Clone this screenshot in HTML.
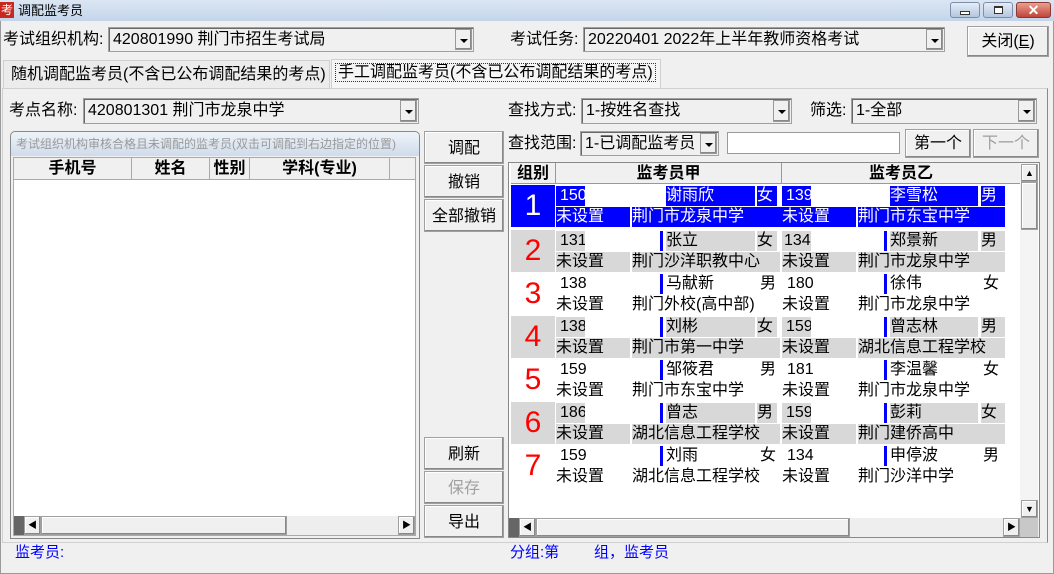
<!DOCTYPE html>
<html><head><meta charset="utf-8"><style>
*{box-sizing:border-box;margin:0;padding:0}
body{width:1054px;height:574px;background:#f0f0f0;position:relative;overflow:hidden;font-family:"Liberation Sans","Noto Sans CJK SC",sans-serif;font-size:16px;color:#000;line-height:20px}
.a{position:absolute;white-space:nowrap}
.combo{position:absolute;background:#f0f0f0;border:1px solid #a0a0a0;box-shadow:inset 1px 1px 0 #696969;padding:1px 4px;line-height:21px;font-size:16px}
.combo .dd{position:absolute;right:1px;top:1px;bottom:1px;width:17px;background:#f0f0f0;border:1px solid #999;box-shadow:inset -1px -1px 0 #888}
.combo .dd:after{content:"";position:absolute;left:4px;top:9px;border:4px solid transparent;border-top:4px solid #000;border-bottom:0}
.btn{position:absolute;background:#f0f0f0;border:1px solid #a0a0a0;box-shadow:inset -1px -1px 0 #888,inset 1px 1px 0 #fff;text-align:center;font-size:16px}
.row{position:absolute;left:511px;width:494px;height:43px}
.row div{position:absolute;height:20px;line-height:20px;font-size:16px;overflow:hidden;white-space:nowrap}
.num{left:0;top:0;width:44px!important;height:42px!important;line-height:42px!important;text-align:center;font-size:30px!important;color:#f00}
.sel div{background:#0000ff;color:#fff}
.sel .num{color:#fff}
.g div{background:#d8d8d8}
.row .m{background:#fff!important}
.row .bar{background:#0000ff!important;width:3px}
</style></head><body>
<!-- title bar -->
<div class="a" style="left:0;top:0;width:1054px;height:21px;background:linear-gradient(#dbe6f4,#c4d5ea)"></div>
<div class="a" style="left:0;top:2px;width:14px;height:16px;background:#c8281e;color:#fff;font-size:12px;line-height:16px;text-align:center">考</div>
<div class="a" style="left:18px;top:1px;font-size:13px;line-height:19px">调配监考员</div>
<div class="a" style="left:950px;top:2px;width:30px;height:16px;border:1px solid #7d8fa8;border-radius:3px;background:linear-gradient(#e4ecf7,#b5c6de)"><div class="a" style="left:9px;top:8px;width:10px;height:4px;border:1px solid #333;background:#fff"></div></div>
<div class="a" style="left:983px;top:2px;width:30px;height:16px;border:1px solid #7d8fa8;border-radius:3px;background:linear-gradient(#e4ecf7,#b5c6de)"><div class="a" style="left:10px;top:3px;width:9px;height:8px;border:1px solid #333;border-top-width:2px;background:#fff"></div></div>
<div class="a" style="left:1016px;top:2px;width:35px;height:16px;border:1px solid #8a3a30;border-radius:3px;background:linear-gradient(#e8a08f,#c0453a);color:#fff;font-weight:bold;font-size:14px;line-height:14px;text-align:center">✕</div>
<div class="a" style="left:0;top:21px;width:1054px;height:553px;border:1px solid #9a9a9a;border-top:0"></div>

<!-- row 1 -->
<div class="a" style="left:3px;top:30px">考试组织机构:</div>
<div class="combo" style="left:108px;top:27px;width:366px;height:25px">420801990 荆门市招生考试局<div class="dd"></div></div>
<div class="a" style="left:510px;top:30px">考试任务:</div>
<div class="combo" style="left:583px;top:27px;width:362px;height:25px">20220401 2022年上半年教师资格考试<div class="dd"></div></div>
<div class="btn" style="left:967px;top:26px;width:82px;height:31px;line-height:29px">关闭(<u>E</u>)</div>

<!-- tabs -->
<div class="a" style="left:3px;top:60px;width:327px;height:28px;border:1px solid #d0d0d0;border-bottom:0;background:#ececec;padding:4px 0 0 7px">随机调配监考员(不含已公布调配结果的考点)</div>
<div class="a" style="left:331px;top:59px;width:330px;height:29px;border:1px solid #d0d0d0;border-bottom:0;background:#f5f5f5;padding:3px 0 0 3px"><span style="border:1px dotted #333;padding:0 2px">手工调配监考员(不含已公布调配结果的考点)</span></div>
<div class="a" style="left:2px;top:88px;width:1046px;height:455px;border:1px solid #d0d0d0;border-right-color:#888"></div>

<div class="a" style="left:9px;top:101px">考点名称:</div>
<div class="combo" style="left:83px;top:98px;width:336px;height:26px">420801301 荆门市龙泉中学<div class="dd"></div></div>

<!-- left group -->
<div class="a" style="left:10px;top:131px;width:410px;height:408px;border:1px solid #888;border-radius:5px 5px 0 0;background:#f0f0f0"></div>
<div class="a" style="left:11px;top:132px;width:408px;height:24px;border-radius:5px 5px 0 0;background:linear-gradient(#eef3f9,#cfdcea);color:#999;font-size:12px;line-height:24px;padding-left:5px">考试组织机构审核合格且未调配的监考员(双击可调配到右边指定的位置)</div>
<div class="a" style="left:13px;top:157px;width:403px;height:379px;background:#fff;border:1px solid #aaa"></div>
<div class="a" style="left:14px;top:158px;width:401px;height:22px;background:#f0f0f0;border-bottom:1px solid #aaa;font-weight:bold;line-height:22px">
<div class="a" style="left:0;width:118px;text-align:center;border-right:1px solid #aaa;height:21px;line-height:21px">手机号</div>
<div class="a" style="left:118px;width:78px;text-align:center;border-right:1px solid #aaa;height:21px;line-height:21px">姓名</div>
<div class="a" style="left:196px;width:40px;text-align:center;border-right:1px solid #aaa;height:21px;line-height:21px">性别</div>
<div class="a" style="left:236px;width:140px;text-align:center;border-right:1px solid #aaa;height:21px;line-height:21px">学科(专业)</div></div>
<div class="a" style="left:14px;top:516px;width:401px;height:19px;background:#eee"></div>
<div class="a" style="left:14px;top:516px;width:10px;height:19px;background:#666"></div>
<div class="btn" style="left:24px;top:516px;width:17px;height:19px;font-size:9px;line-height:17px">◀</div>
<div class="btn" style="left:41px;top:516px;width:246px;height:19px"></div>
<div class="btn" style="left:398px;top:516px;width:17px;height:19px;font-size:9px;line-height:17px">▶</div>

<!-- mid buttons -->
<div class="btn" style="left:424px;top:131px;width:80px;height:33px;line-height:33px">调配</div>
<div class="btn" style="left:424px;top:165px;width:80px;height:33px;line-height:33px">撤销</div>
<div class="btn" style="left:424px;top:199px;width:80px;height:33px;line-height:33px">全部撤销</div>
<div class="btn" style="left:424px;top:437px;width:80px;height:33px;line-height:33px">刷新</div>
<div class="btn" style="left:424px;top:471px;width:80px;height:33px;line-height:33px;color:#a0a0a0">保存</div>
<div class="btn" style="left:424px;top:505px;width:80px;height:33px;line-height:33px">导出</div>

<!-- right controls -->
<div class="a" style="left:508px;top:101px">查找方式:</div>
<div class="combo" style="left:581px;top:98px;width:211px;height:26px">1-按姓名查找<div class="dd"></div></div>
<div class="a" style="left:810px;top:101px">筛选:</div>
<div class="combo" style="left:851px;top:98px;width:186px;height:26px">1-全部<div class="dd"></div></div>
<div class="a" style="left:508px;top:134px">查找范围:</div>
<div class="combo" style="left:580px;top:131px;width:139px;height:25px">1-已调配监考员<div class="dd"></div></div>
<div class="a" style="left:727px;top:132px;width:173px;height:22px;background:#fff;border:1px solid #999"></div>
<div class="btn" style="left:905px;top:129px;width:66px;height:29px;line-height:27px">第一个</div>
<div class="btn" style="left:973px;top:129px;width:66px;height:29px;line-height:27px;color:#a0a0a0">下一个</div>

<!-- grid -->
<div class="a" style="left:508px;top:162px;width:532px;height:376px;background:#fff;border:1px solid #888"></div>
<div class="a" style="left:511px;top:163px;width:509px;height:21px;background:#f0f0f0;font-weight:bold;line-height:21px;border-bottom:1px solid #999">
<div class="a" style="left:0;width:45px;text-align:center;border-right:1px solid #999;height:20px;line-height:21px">组别</div>
<div class="a" style="left:45px;width:226px;text-align:center;border-right:1px solid #999;height:20px;line-height:21px">监考员甲</div>
<div class="a" style="left:271px;width:238px;text-align:center;height:20px;line-height:21px">监考员乙</div></div>
<div class="a" style="left:1020px;top:163px;width:18px;height:355px;background:#f4f4f4"></div>
<div class="btn" style="left:1021px;top:164px;width:17px;height:18px;font-size:9px;line-height:16px">▲</div>
<div class="btn" style="left:1021px;top:182px;width:17px;height:48px"></div>
<div class="btn" style="left:1021px;top:500px;width:17px;height:18px;font-size:9px;line-height:16px">▼</div>
<div class="a" style="left:509px;top:518px;width:530px;height:19px;background:#eee"></div>
<div class="a" style="left:509px;top:518px;width:10px;height:19px;background:#666"></div>
<div class="btn" style="left:519px;top:518px;width:17px;height:19px;font-size:9px;line-height:17px">◀</div>
<div class="btn" style="left:536px;top:518px;width:314px;height:19px"></div>
<div class="btn" style="left:1003px;top:518px;width:17px;height:19px;font-size:9px;line-height:17px">▶</div>
<div class="a" style="left:1020px;top:518px;width:18px;height:19px;background:#c8c8c8"></div>

<div class="row sel" style="top:185px"><div class="num">1</div>
<div style="left:45px;top:1px;width:101px;padding-left:4px">150</div><div class="m" style="left:74px;top:1px;width:72px"></div><div style="left:155px;top:1px;width:89px">谢雨欣</div><div style="left:246px;top:1px;width:20px">女</div>
<div style="left:271px;top:1px;width:101px;padding-left:4px">139</div><div class="m" style="left:300px;top:1px;width:72px"></div><div style="left:379px;top:1px;width:88px">李雪松</div><div style="left:470px;top:1px;width:24px">男</div>
<div style="left:45px;top:22px;width:74px">未设置</div><div style="left:121px;top:22px;width:150px">荆门市龙泉中学</div><div style="left:271px;top:22px;width:74px">未设置</div><div style="left:347px;top:22px;width:147px">荆门市东宝中学</div></div>

<div class="row g" style="top:230px"><div class="num">2</div>
<div style="left:45px;top:1px;width:101px;padding-left:4px">131</div><div class="m" style="left:74px;top:1px;width:72px"></div><div class="bar" style="left:149px;top:1px"></div><div style="left:155px;top:1px;width:89px">张立</div><div style="left:246px;top:1px;width:20px">女</div>
<div style="left:271px;top:1px;width:101px;padding-left:2px">134</div><div class="m" style="left:300px;top:1px;width:72px"></div><div class="bar" style="left:373px;top:1px"></div><div style="left:379px;top:1px;width:88px">郑景新</div><div style="left:470px;top:1px;width:24px">男</div>
<div style="left:45px;top:22px;width:74px">未设置</div><div style="left:121px;top:22px;width:148px">荆门沙洋职教中心</div><div style="left:271px;top:22px;width:74px">未设置</div><div style="left:347px;top:22px;width:147px">荆门市龙泉中学</div></div>

<div class="row" style="top:273px"><div class="num">3</div>
<div style="left:49px;top:1px">138</div><div class="bar" style="left:149px;top:1px"></div><div style="left:155px;top:1px">马献新</div><div style="left:249px;top:1px">男</div>
<div style="left:276px;top:1px">180</div><div class="bar" style="left:373px;top:1px"></div><div style="left:379px;top:1px">徐伟</div><div style="left:472px;top:1px">女</div>
<div style="left:45px;top:22px">未设置</div><div style="left:121px;top:22px">荆门外校(高中部)</div><div style="left:271px;top:22px">未设置</div><div style="left:347px;top:22px">荆门市龙泉中学</div></div>

<div class="row g" style="top:316px"><div class="num">4</div>
<div style="left:45px;top:1px;width:101px;padding-left:4px">138</div><div class="m" style="left:74px;top:1px;width:72px"></div><div class="bar" style="left:149px;top:1px"></div><div style="left:155px;top:1px;width:89px">刘彬</div><div style="left:246px;top:1px;width:20px">女</div>
<div style="left:271px;top:1px;width:101px;padding-left:4px">159</div><div class="m" style="left:300px;top:1px;width:72px"></div><div class="bar" style="left:373px;top:1px"></div><div style="left:379px;top:1px;width:88px">曾志林</div><div style="left:470px;top:1px;width:24px">男</div>
<div style="left:45px;top:22px;width:74px">未设置</div><div style="left:121px;top:22px;width:148px">荆门市第一中学</div><div style="left:271px;top:22px;width:74px">未设置</div><div style="left:347px;top:22px;width:147px">湖北信息工程学校</div></div>

<div class="row" style="top:359px"><div class="num">5</div>
<div style="left:49px;top:1px">159</div><div class="bar" style="left:149px;top:1px"></div><div style="left:155px;top:1px">邹筱君</div><div style="left:249px;top:1px">男</div>
<div style="left:276px;top:1px">181</div><div class="bar" style="left:373px;top:1px"></div><div style="left:379px;top:1px">李温馨</div><div style="left:472px;top:1px">女</div>
<div style="left:45px;top:22px">未设置</div><div style="left:121px;top:22px">荆门市东宝中学</div><div style="left:271px;top:22px">未设置</div><div style="left:347px;top:22px">荆门市龙泉中学</div></div>

<div class="row g" style="top:402px"><div class="num">6</div>
<div style="left:45px;top:1px;width:101px;padding-left:4px">186</div><div class="m" style="left:74px;top:1px;width:72px"></div><div class="bar" style="left:149px;top:1px"></div><div style="left:155px;top:1px;width:89px">曾志</div><div style="left:246px;top:1px;width:20px">男</div>
<div style="left:271px;top:1px;width:101px;padding-left:4px">159</div><div class="m" style="left:300px;top:1px;width:72px"></div><div class="bar" style="left:373px;top:1px"></div><div style="left:379px;top:1px;width:88px">彭莉</div><div style="left:470px;top:1px;width:24px">女</div>
<div style="left:45px;top:22px;width:74px">未设置</div><div style="left:121px;top:22px;width:148px">湖北信息工程学校</div><div style="left:271px;top:22px;width:74px">未设置</div><div style="left:347px;top:22px;width:147px">荆门建侨高中</div></div>

<div class="row" style="top:445px"><div class="num">7</div>
<div style="left:49px;top:1px">159</div><div class="bar" style="left:149px;top:1px"></div><div style="left:155px;top:1px">刘雨</div><div style="left:249px;top:1px">女</div>
<div style="left:276px;top:1px">134</div><div class="bar" style="left:373px;top:1px"></div><div style="left:379px;top:1px">申停波</div><div style="left:472px;top:1px">男</div>
<div style="left:45px;top:22px">未设置</div><div style="left:121px;top:22px">湖北信息工程学校</div><div style="left:271px;top:22px">未设置</div><div style="left:347px;top:22px">荆门沙洋中学</div></div>

<!-- status -->
<div class="a" style="left:15px;top:543px;color:#0000ff;font-size:15px">监考员:</div>
<div class="a" style="left:510px;top:543px;color:#0000ff;font-size:15px">分组:第</div>
<div class="a" style="left:594px;top:543px;color:#0000ff;font-size:15px">组，监考员</div>
</body></html>
